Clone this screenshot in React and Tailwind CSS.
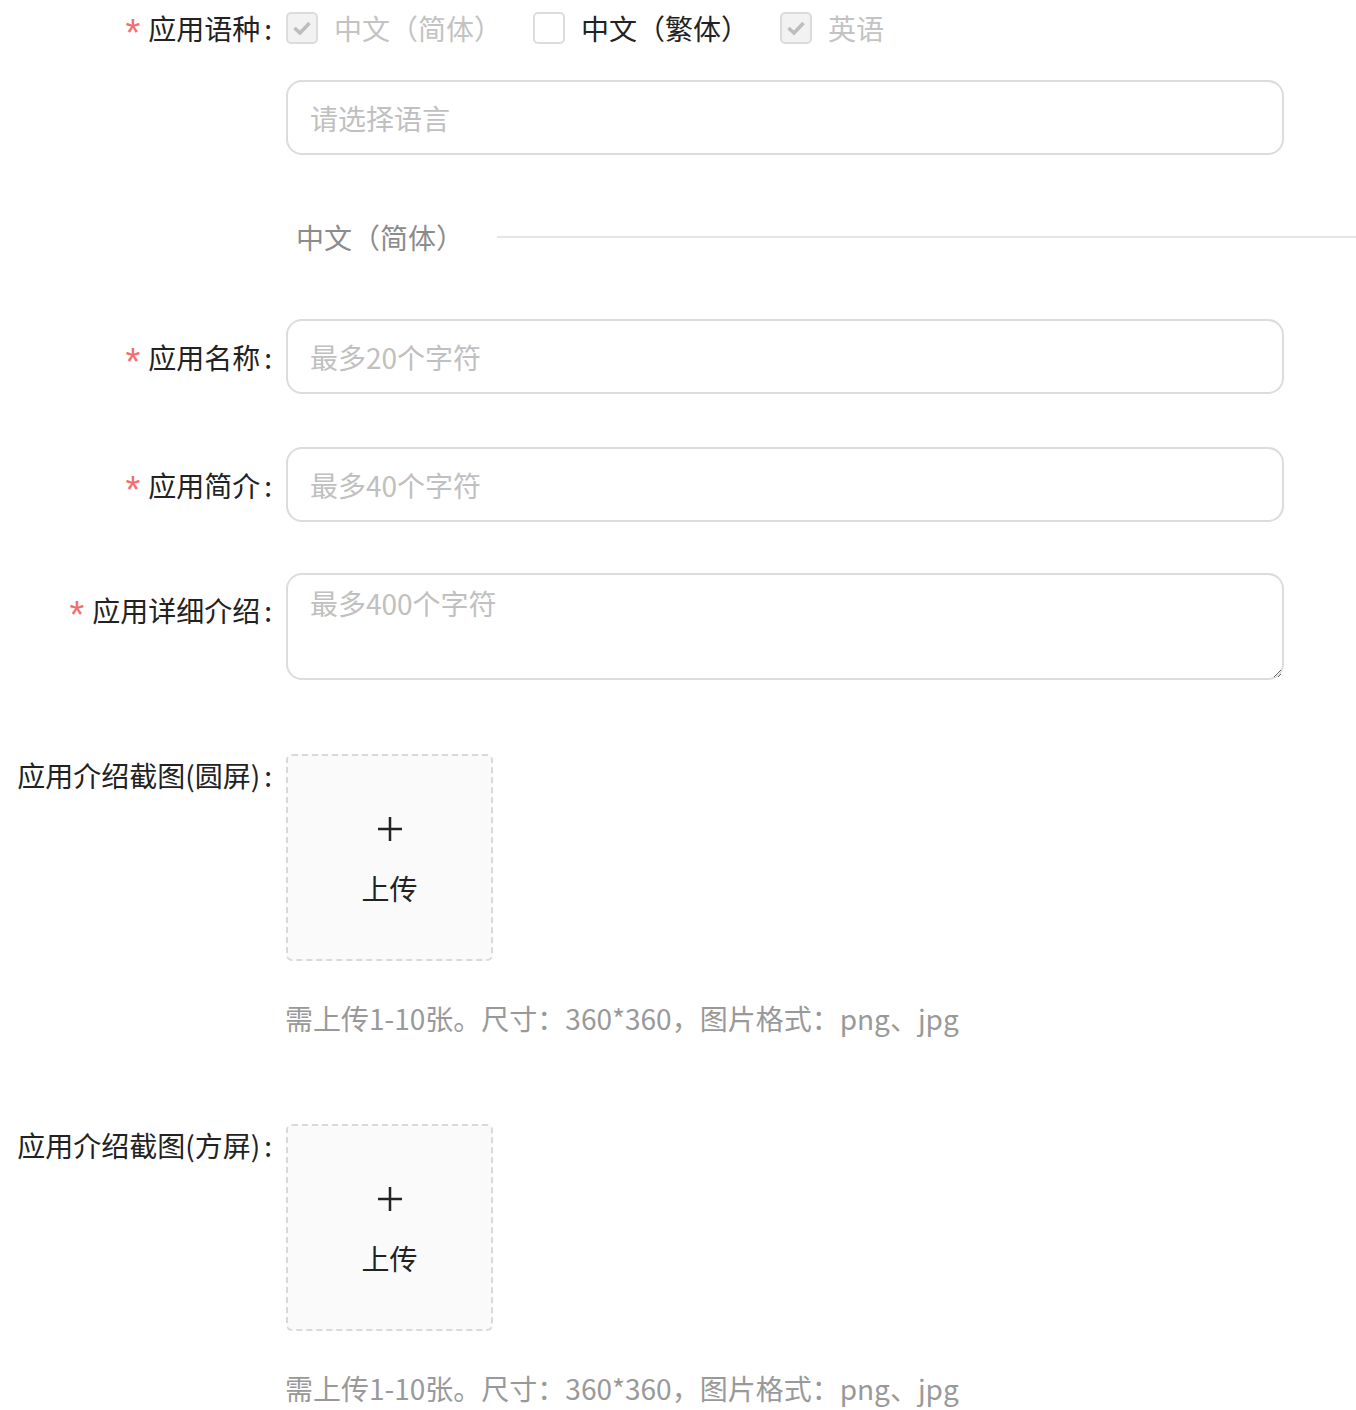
import React from "react";

const font = { fontFamily: '"Noto Sans CJK SC", "Noto Sans", sans-serif' };

function Check({ checked, disabled, label }) {
  return (
    <label className="flex items-center">
      <span
        className={
          "w-[32px] h-[32px] rounded-[5px] border-2 flex items-center justify-center " +
          (disabled ? "bg-[#f2f2f2] border-[#dcdcdc]" : "bg-white border-[#dcdcdc]")
        }
      >
        {checked && (
          <svg width="20" height="16" viewBox="0 0 20 16">
            <path d="M2.5 8 L8 13 L17.5 3" fill="none" stroke="#bdbdbd" strokeWidth="3.5" />
          </svg>
        )}
      </span>
      <span className={"ml-[16px] " + (disabled ? "text-[#c3c3c3]" : "text-[#222]")}>{label}</span>
    </label>
  );
}

function Label({ req, children, className = "" }) {
  return (
    <div className={"w-[286px] shrink-0 flex justify-end items-center pr-[14px] text-[#222] " + className}>
      {req && (
        <span
          className="text-[#f56c6c] mr-[8px] text-[38px] leading-none translate-y-[5px]"
          style={{ fontFamily: '"Liberation Sans", Arial, sans-serif' }}
        >
          *
        </span>
      )}
      <span>{children}</span>
      <span className="ml-[4px]">:</span>
    </div>
  );
}

function InputRow({ label, placeholder, mt }) {
  return (
    <div className={"flex items-center " + mt}>
      <Label req>{label}</Label>
      <div className="w-[998px] h-[75px] rounded-[16px] border-2 border-[#dcdcdc] flex items-center px-[22px] text-[#c0c0c0]">
        {placeholder}
      </div>
    </div>
  );
}

function Upload({ label, mt }) {
  return (
    <div className={mt}>
      <div className="flex items-start">
        <Label className="leading-[42px]">{label}</Label>
        <div className="w-[207px] h-[207px] rounded-[6px] border-2 border-dashed border-[#d9d9d9] bg-[#fafafa] flex flex-col items-center">
          <svg width="26" height="26" viewBox="0 0 26 26" className="mt-[60px]">
            <path d="M13 1 V25 M1 13 H25" stroke="#222" strokeWidth="2.5" />
          </svg>
          <div className="mt-[26px] text-[#222] leading-[40px]">上传</div>
        </div>
      </div>
      <div className="pl-[285px] mt-[37px] text-[#999] leading-[40px]">
        需上传1-10张。尺寸：360*360，图片格式：png、jpg
      </div>
    </div>
  );
}

export default function App() {
  return (
    <div className="w-[1356px] h-[1410px] bg-white overflow-hidden text-[28px]" style={font}>
      <div className="flex items-center h-[56px]">
        <Label req>应用语种</Label>
        <div className="flex items-center">
          <Check checked disabled label="中文（简体）" />
          <div className="w-[31px]" />
          <Check label="中文（繁体）" />
          <div className="w-[31px]" />
          <Check checked disabled label="英语" />
        </div>
      </div>
      <div className="flex mt-[24px]">
        <div className="w-[286px] shrink-0" />
        <div className="w-[998px] h-[75px] rounded-[16px] border-2 border-[#dcdcdc] flex items-center px-[22px] text-[#c0c0c0]">
          请选择语言
        </div>
      </div>
      <div className="flex items-center mt-[62px] h-[40px] pl-[296px]">
        <span className="text-[#8c8c8c]">中文（简体）</span>
        <div className="flex-1 h-[2px] bg-[#e6e6e6] ml-[33px]" />
      </div>
      <InputRow label="应用名称" placeholder="最多20个字符" mt="mt-[62px]" />
      <InputRow label="应用简介" placeholder="最多40个字符" mt="mt-[53px]" />
      <div className="flex items-start mt-[51px]">
        <Label req className="h-[74px]">应用详细介绍</Label>
        <textarea
          placeholder="最多400个字符"
          className="w-[998px] h-[107px] rounded-[16px] border-2 border-[#dcdcdc] px-[22px] pt-[7px] placeholder:text-[#c0c0c0] outline-none"
          style={font}
        />
      </div>
      <Upload label="应用介绍截图(圆屏)" mt="mt-[74px]" />
      <Upload label="应用介绍截图(方屏)" mt="mt-[86px]" />
    </div>
  );
}
